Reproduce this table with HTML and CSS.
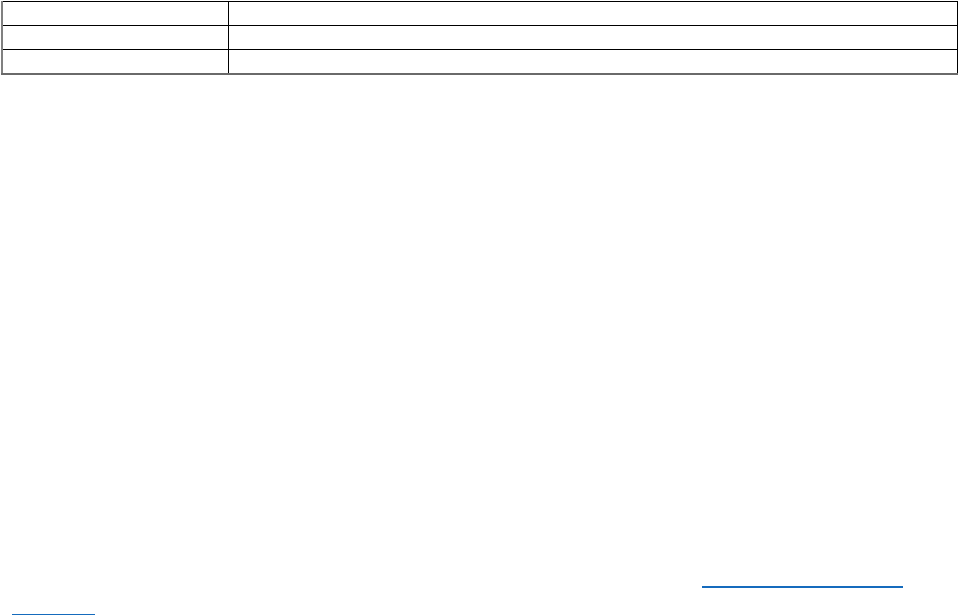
FILE: index.html
```html
<!DOCTYPE html>
<html>

<head>
    <title>Document</title>
    <meta charset="utf-8">
    <link rel="stylesheet" href="styles.css">
</head>

<body>
    <table class="sheet">
        <tr>
            <td class="key">Name</td>
            <td>Value</td>
        </tr>
        <tr>
            <td class="key">Version</td>
            <td>1.0</td>
        </tr>
        <tr>
            <td class="key">Date</td>
            <td>2020</td>
        </tr>
    </table>
    <p class="note"><span class="lead">For more information about this document and its contents, please see</span><a class="ref" href="#"><span class="part one">https://www.example.com/</span><br><span class="part two">docs.html</span></a></p>
</body>

</html>
```

FILE: styles.css
```css
body {
    margin: 0;
    font-family: 'Liberation Sans', Arial, sans-serif;
    font-size: 15px;
    color: #fff;
}

.sheet {
    border-collapse: collapse;
    margin: 1px 0 0 1px;
    width: 957px;
}

.sheet td {
    border: 1px solid #000;
    height: 23px;
    padding: 0 4px;
}

.sheet tr td:first-child {
    border-left: 2px solid #808080;
}

.sheet tr:last-child td {
    border-bottom: 2px solid #6a6a6a;
}

.sheet .key {
    width: 217px;
}

.note {
    margin: 489px 0 0 12px;
    line-height: 28px;
}

.note .lead {
    display: inline-block;
    width: 690px;
    white-space: nowrap;
    overflow: hidden;
    vertical-align: top;
}

.ref {
    color: #fff;
    text-decoration: none;
}

.ref .part {
    display: inline-block;
    line-height: 22px;
    border-bottom: 2px solid #156bbd;
    white-space: nowrap;
    overflow: hidden;
    vertical-align: top;
}

.ref .one {
    width: 201px;
}

.ref .two {
    width: 83px;
}
```
